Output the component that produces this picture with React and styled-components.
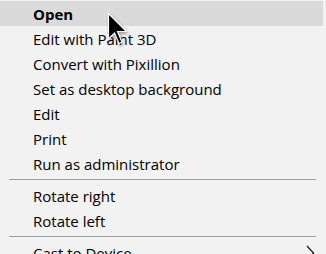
import React from 'react';
import styled, { createGlobalStyle } from 'styled-components';

const Global = createGlobalStyle`
  html, body {
    margin: 0;
    padding: 0;
    background: #f2f2f2;
    overflow: hidden;
  }
`;

const Menu = styled.div`
  position: relative;
  width: 326px;
  height: 254px;
  padding-top: 1px;
  box-sizing: border-box;
  background: #f2f2f2;
  font-family: "Open Sans", "Noto Sans", "Liberation Sans", sans-serif;
  font-size: 15px;
  color: #000;
  overflow: hidden;
`;

const Item = styled.div`
  display: flex;
  align-items: center;
  height: 25px;
  margin-right: 3px;
  padding-left: 33px;
  padding-right: 8px;
  background: ${p => (p.$active ? '#dadada' : 'transparent')};
  font-weight: ${p => (p.$bold ? 700 : 400)};
  white-space: nowrap;
`;

const Label = styled.span`
  flex: 1;
`;

const Separator = styled.div`
  height: 7px;
  display: flex;
  align-items: center;
  padding: 0 10px 0 9px;

  &::before {
    content: '';
    flex: 1;
    height: 1px;
    background: #a0a0a0;
  }
`;

const Cursor = styled.svg`
  position: absolute;
  left: 107px;
  top: 12px;
  filter: drop-shadow(1px 2px 1.5px rgba(0, 0, 0, 0.35));
`;

const Chevron = () => (
  <svg width="9" height="16" viewBox="0 0 9 16">
    <path d="M1 1 L7.5 8 L1 15" fill="none" stroke="#202020" strokeWidth="1.3" />
  </svg>
);

const items1 = [
  'Edit with Paint 3D',
  'Convert with Pixillion',
  'Set as desktop background',
  'Edit',
  'Print',
  'Run as administrator',
];

export default function App() {
  return (
    <Menu>
      <Global />
      <Item $active $bold><Label>Open</Label></Item>
      {items1.map(t => (
        <Item key={t}><Label>{t}</Label></Item>
      ))}
      <Separator />
      <Item><Label>Rotate right</Label></Item>
      <Item><Label>Rotate left</Label></Item>
      <Separator />
      <Item><Label>Cast to Device</Label><Chevron /></Item>
      <Cursor width="22" height="34" viewBox="0 0 22 34">
        <path
          d="M1.5 1.5 L1.5 27 L7.5 21 L12 31.5 L15 30 L10.5 19.5 L19.5 19.5 Z"
          fill="#000"
          stroke="#fff"
          strokeWidth="1.2"
          strokeLinejoin="miter"
        />
      </Cursor>
    </Menu>
  );
}
